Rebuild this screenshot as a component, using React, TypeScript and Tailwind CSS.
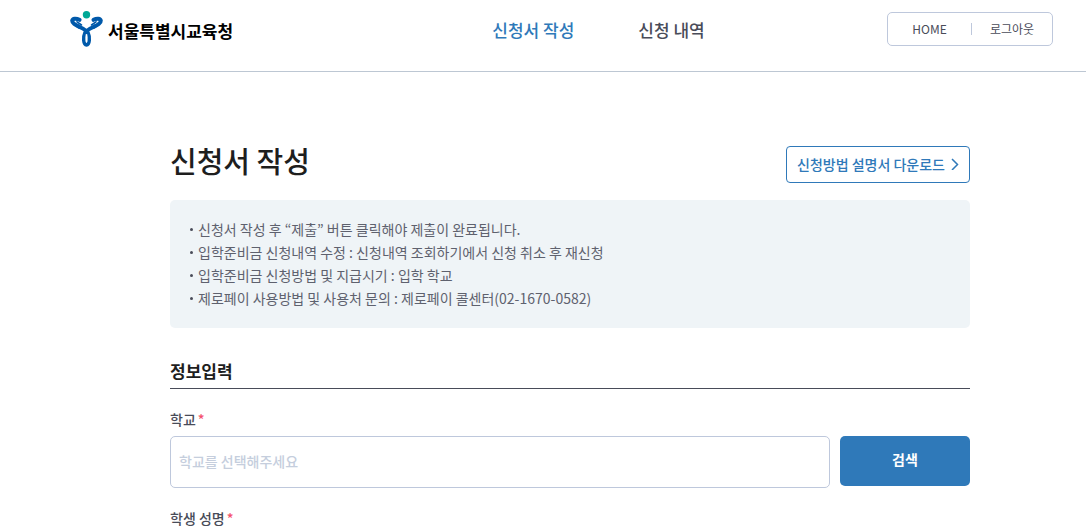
import React from "react";

const notices = [
  "신청서 작성 후 “제출” 버튼 클릭해야 제출이 완료됩니다.",
  "입학준비금 신청내역 수정 : 신청내역 조회하기에서 신청 취소 후 재신청",
  "입학준비금 신청방법 및 지급시기 : 입학 학교",
  "제로페이 사용방법 및 사용처 문의 : 제로페이 콜센터(02-1670-0582)",
];

function Logo() {
  return (
    <svg viewBox="0 0 34 38" className="h-[38px] w-[34px] shrink-0" aria-hidden="true">
      <circle cx="16.5" cy="4.8" r="3.7" fill="#00a896" />
      <g fill="none" stroke="#0059aa" strokeLinecap="round" strokeLinejoin="round">
        <path d="M9.5 9.8C6 8 2.8 8.4 2.2 10.6C2 13.2 5.5 15 9 16.8" strokeWidth="4" />
        <path d="M23.5 9.8C27 8 30.2 8.4 30.8 10.6C31 13.2 27.5 15 24 16.8" strokeWidth="4" />
        <path d="M8 16.2C12 18.2 16 19.6 18 22.8C20 27 19.6 34.9 16.5 35C13.4 34.9 13 27 15 22.8C17 19.6 21 18.2 25 16.2" strokeWidth="3.7" />
        <path d="M7 11.8L11.5 15M26 11.8L21.5 15" strokeWidth="1.6" />
      </g>
      <path d="M16.5 25V31.5" stroke="#ffffff" strokeWidth="1.8" strokeLinecap="round" />
    </svg>
  );
}

function FieldLabel({ htmlFor, children }: { htmlFor: string; children: React.ReactNode }) {
  return (
    <label htmlFor={htmlFor} className="block text-sm leading-5 font-medium text-[#494c59]">
      {children}
      <span className="ml-0.5 text-[#f4516c]">*</span>
    </label>
  );
}

export default function App() {
  return (
    <div className="overflow-hidden bg-white font-['Noto_Sans_CJK_KR',sans-serif] text-[#1e1e1e]">
      <header className="flex h-[72px] items-start border-b border-[#bdc7d3] pr-[33px] pl-[70px]">
        <a href="#" className="mt-[10px] flex flex-1 items-center gap-1 text-[17px] leading-6 font-bold whitespace-nowrap text-black">
          <Logo />
          <span className="pt-1">서울특별시교육청</span>
        </a>
        <nav className="mt-[18px] ml-[74px] flex gap-16 text-[17px] leading-6 font-medium whitespace-nowrap">
          <a href="#" className="text-[#2f79b9]">신청서 작성</a>
          <a href="#" className="text-[#494c59]">신청 내역</a>
        </nav>
        <div className="flex flex-1 justify-end">
          <div className="mt-3 flex h-[34px] w-[166px] items-center rounded-[5px] border border-[#bec8dc] text-xs text-[#494c59]">
            <a href="#" className="flex-1 text-center">HOME</a>
            <span className="h-3 w-px bg-[#bec8dc]" />
            <a href="#" className="w-20 text-center">로그아웃</a>
          </div>
        </div>
      </header>

      <main className="pr-[116px] pl-[170px]">
        <div className="mt-[74px] flex items-start justify-between">
          <h1 className="text-[29px] leading-7 font-medium">신청서 작성</h1>
          <button type="button" className="flex h-[37px] items-center gap-[6px] rounded-[4px] border border-[#2f79b9] px-[10px] pb-0.5 text-sm font-medium text-[#2f79b9]">
            신청방법 설명서 다운로드
            <svg viewBox="0 0 8 12" className="h-3 w-2" fill="none" stroke="currentColor" strokeWidth="1.5" aria-hidden="true">
              <path d="M1 1L6.5 6.5L1 12" />
            </svg>
          </button>
        </div>

        <ul className="mt-[17px] rounded-[5px] bg-[#eff4f7] px-5 py-[18px] text-sm leading-[23px] text-[#5e616e]">
          {notices.map((notice) => (
            <li key={notice} className="flex items-center gap-[5px]">
              <span className="size-[3px] shrink-0 rounded-full bg-[#494c59]" />
              {notice}
            </li>
          ))}
        </ul>

        <form>
          <h2 className="mt-[31px] border-b border-[#494c59] pb-[5px] text-[17px] leading-6 font-bold">정보입력</h2>
          <div className="mt-5">
            <FieldLabel htmlFor="school">학교</FieldLabel>
            <div className="mt-[7px] flex items-start gap-[10px]">
              <input
                id="school"
                type="text"
                placeholder="학교를 선택해주세요"
                className="h-[52px] min-w-0 flex-1 rounded-[5px] border border-[#bec8dc] px-2 pb-0.5 text-sm font-medium placeholder:text-[#c5cedd]"
              />
              <button type="button" className="h-[50px] w-[130px] rounded-[5px] bg-[#2f79b9] pb-1 text-sm font-bold text-white">검색</button>
            </div>
          </div>
          <div className="mt-5">
            <FieldLabel htmlFor="student">학생 성명</FieldLabel>
          </div>
        </form>
      </main>
    </div>
  );
}
